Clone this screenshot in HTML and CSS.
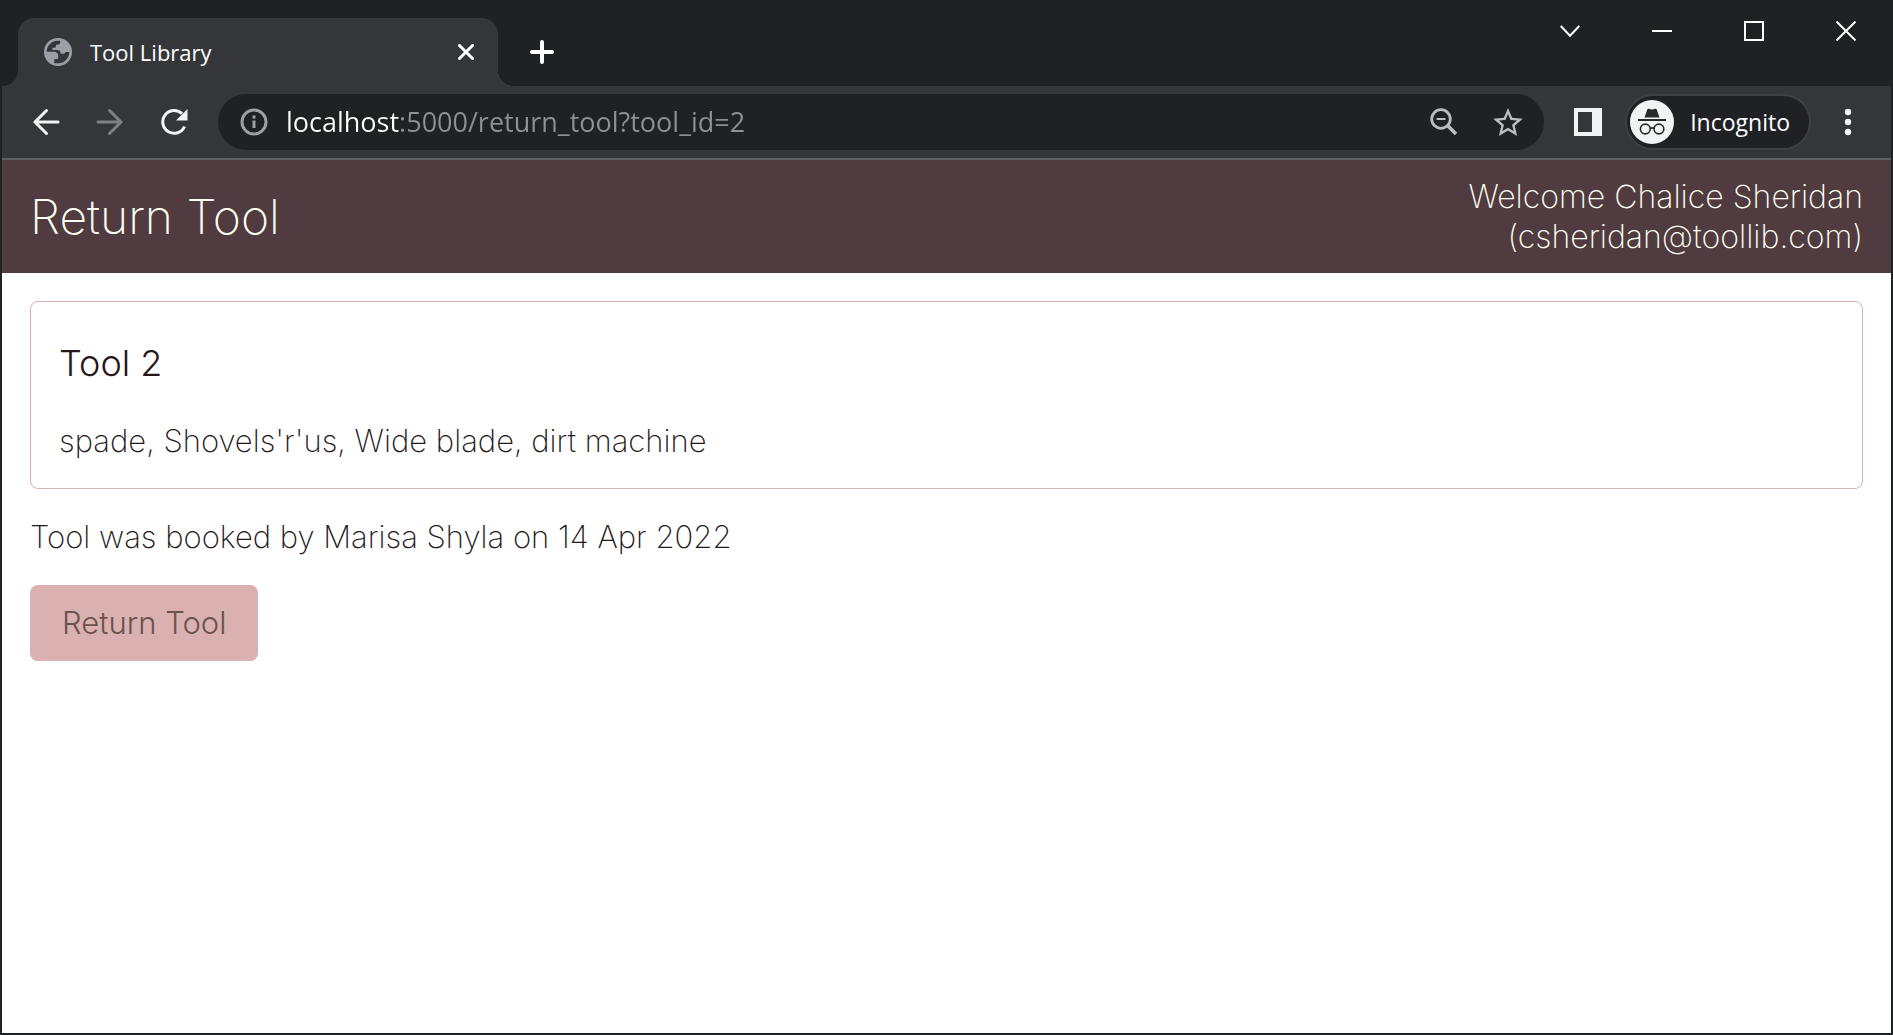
FILE: index.html
```html
<!DOCTYPE html>
<html lang="en">
<head>
<meta charset="utf-8">
<meta name="viewport" content="width=device-width, initial-scale=1">
<title>Tool Library</title>
<link rel="stylesheet" href="styles.css">
</head>
<body>
<div class="window">
  <div class="tab-strip">
    <div class="tab">
      <svg class="tab-globe" viewBox="0 0 28 28" width="28" height="28" aria-hidden="true"><circle cx="14" cy="14" r="14" fill="#9aa0a6"/><path d="M2.700 13.800C2.700 7.500 8 2.600 14 2.700h2.200v1.800c0 1.200-1 2.200-2.300 2.200h-2v1.700c0 .8-.6 1.300-1.400 1.300H8.400V12h5.200c1.800 0 3 1.300 3 2.800v.9h3c1 0 1.700-.8 1.700-1.700h4c0 6.300-5 11.300-11.300 11.300h-3.700v-4.200h2.400c1 0 1.500-.7 1.500-1.500v-1.900c0-2.100-1.700-3.900-3.900-3.900z" fill="#35363a"/></svg>
      <span class="tab-title">Tool Library</span>
      <button class="icon-button tab-close" type="button" aria-label="Close tab"><svg viewBox="0 0 16 16" width="16" height="16"><path d="M1.500 1.500l13 13M14.500 1.500l-13 13" stroke="#fff" stroke-width="3" stroke-linecap="round"/></svg></button>
    </div>
    <button class="icon-button new-tab" type="button" aria-label="New tab"><svg viewBox="0 0 24 24" width="24" height="24"><path d="M12 2v20M2 12h20" stroke="#fff" stroke-width="4" stroke-linecap="round"/></svg></button>
    <div class="window-controls">
      <button class="icon-button" type="button" aria-label="Search tabs"><svg viewBox="0 0 20 20" width="20" height="20" fill="none"><path d="M.7 5l9.300 9.800 9.300-9.800" stroke="#fff" stroke-width="2"/></svg></button>
      <button class="icon-button" type="button" aria-label="Minimize"><svg viewBox="0 0 20 20" width="20" height="20"><path d="M0 10h20" stroke="#fff" stroke-width="2"/></svg></button>
      <button class="icon-button" type="button" aria-label="Maximize"><svg viewBox="0 0 20 20" width="20" height="20" fill="none"><path d="M1 1h18v18H1z" stroke="#fff" stroke-width="2"/></svg></button>
      <button class="icon-button" type="button" aria-label="Close window"><svg viewBox="0 0 20 20" width="20" height="20"><path d="M.5.5l19 19M19.500.5l-19 19" stroke="#fff" stroke-width="2"/></svg></button>
    </div>
  </div>

  <div class="toolbar">
    <div class="nav-buttons">
      <button class="icon-button" type="button" aria-label="Back"><svg viewBox="0 0 28 28" width="28" height="28" fill="none"><path d="M26 14H3M14.500 2.500L3 14l11.500 11.500" stroke="#f1f3f4" stroke-width="3" stroke-linecap="round"/></svg></button>
      <button class="icon-button" type="button" aria-label="Forward" disabled><svg viewBox="0 0 28 28" width="28" height="28" fill="none"><path d="M2 14h23M13.500 2.500L25 14 13.500 25.500" stroke="#808184" stroke-width="3" stroke-linecap="round"/></svg></button>
      <button class="icon-button" type="button" aria-label="Reload"><svg viewBox="0 0 28 28" width="28" height="28" fill="none"><path d="M24.600 18.500A11.400 11.400 0 1 1 22 5.600" stroke="#f1f3f4" stroke-width="3"/><path d="M27.500 1v11.500h-11.500z" fill="#f1f3f4"/></svg></button>
    </div>
    <div class="address-bar">
      <button class="icon-button" type="button" aria-label="Site information"><svg viewBox="0 0 28 28" width="28" height="28" fill="none"><circle cx="14" cy="14" r="12" stroke="#9aa0a6" stroke-width="3"/><path d="M14 12.500v7.500M14 7.500v3" stroke="#9aa0a6" stroke-width="3"/></svg></button>
      <input class="address" type="text" aria-label="Address" spellcheck="false" value="localhost:5000/return_tool?tool_id=2">
      <button class="icon-button zoom-button" type="button" aria-label="Zoom"><svg viewBox="0 0 28 28" width="28" height="28" fill="none"><circle cx="11" cy="11" r="9.300" stroke="#bdbdbe" stroke-width="2.800"/><path d="M17.500 17.500l8.500 8.500" stroke="#bdbdbe" stroke-width="3.500"/><path d="M6.500 11h9" stroke="#bdbdbe" stroke-width="2"/></svg></button>
      <button class="icon-button" type="button" aria-label="Bookmark this page"><svg viewBox="2 2 20 19" width="30" height="28"><path d="M22 9.240l-7.190-.62L12 2 9.190 8.630 2 9.240l5.460 4.730L5.820 21 12 17.270 18.180 21l-1.630-7.030L22 9.240zM12 15.400l-3.760 2.270 1-4.280-3.320-2.880 4.380-.38L12 6.100l1.710 4.040 4.380.38-3.320 2.880 1 4.280L12 15.400z" fill="#bdbdbe"/></svg></button>
    </div>
    <button class="icon-button side-panel" type="button" aria-label="Side panel"><svg viewBox="0 0 28 28" width="28" height="28"><path d="M0 0h28v28H0zM4 4v20h14V4z" fill="#f1f3f4" fill-rule="evenodd"/></svg></button>
    <button class="profile" type="button">
      <svg viewBox="0 0 44 44" width="44" height="44" fill="none" aria-hidden="true"><circle cx="22" cy="22" r="22" fill="#f1f3f4"/><path d="M14.500 17.500l2.700-7.800c.3-.9.900-1.200 1.700-.9 2 .8 4.200.8 6.200 0 .8-.3 1.400 0 1.700.9l2.700 7.800z" fill="#292a2d"/><path d="M8 20h28" stroke="#292a2d" stroke-width="2"/><circle cx="15.300" cy="29" r="4.900" stroke="#292a2d" stroke-width="1.600"/><circle cx="28.900" cy="29" r="4.900" stroke="#292a2d" stroke-width="1.600"/><path d="M20.200 28.500q2-1.200 3.900 0" stroke="#292a2d" stroke-width="1.600"/></svg>
      <span>Incognito</span>
    </button>
    <button class="icon-button menu" type="button" aria-label="Menu"><svg viewBox="0 0 8 28" width="8" height="28" fill="#f1f3f4"><circle cx="4" cy="4" r="3.200"/><circle cx="4" cy="14" r="3.200"/><circle cx="4" cy="24" r="3.200"/></svg></button>
  </div>

  <div class="page">
    <header class="page-header">
      <h1>Return Tool</h1>
      <p class="welcome">Welcome Chalice Sheridan<br>(csheridan@toollib.com)</p>
    </header>
    <main class="content">
      <section class="card">
        <h2>Tool 2</h2>
        <p>spade, Shovels'r'us, Wide blade, dirt machine</p>
      </section>
      <p>Tool was booked by Marisa Shyla on 14 Apr 2022</p>
      <button class="return-button" type="button">Return Tool</button>
    </main>
  </div>
</div>
</body>
</html>
```
FILE: styles.css
```css
* {
  box-sizing: border-box;
}

body {
  margin: 0;
  background: #202124;
  font-family: "Open Sans", "Noto Sans", sans-serif;
}

button {
  border: 0;
  padding: 0;
  font: inherit;
}

svg {
  display: block;
}

.window {
  display: flex;
  flex-direction: column;
  min-height: 100vh;
  padding: 0 2px 2px;
  background: #202124;
}

.icon-button {
  flex: none;
  background: none;
}

/* Tab strip */
.tab-strip {
  display: flex;
  align-items: flex-start;
  height: 86px;
  padding-left: 16px;
}

.tab {
  position: relative;
  display: flex;
  align-items: center;
  align-self: flex-end;
  width: 480px;
  height: 68px;
  padding: 0 24px 0 26px;
  border-radius: 16px 16px 0 0;
  background: #35363a;
}

/* Flared corners where the tab meets the toolbar */
.tab::before,
.tab::after {
  content: "";
  position: absolute;
  bottom: 0;
  width: 16px;
  height: 16px;
}

.tab::before {
  left: -16px;
  background: radial-gradient(circle at 0 0, #202124 16px, #35363a 16px);
}

.tab::after {
  right: -16px;
  background: radial-gradient(circle at 100% 0, #202124 16px, #35363a 16px);
}

.tab-title {
  flex: 1;
  padding-left: 18px;
  color: #fff;
  font-size: 22px;
}

.new-tab {
  margin: 40px 0 0 32px;
}

.window-controls {
  display: flex;
  gap: 72px;
  margin-left: auto;
  padding: 21px 35px 0 0;
}

/* Toolbar */
.toolbar {
  display: flex;
  align-items: center;
  height: 74px;
  padding: 0 39px 0 30px;
  border-bottom: 2px solid #5f6063;
  background: #35363a;
}

.nav-buttons {
  display: flex;
  gap: 36px;
}

.address-bar {
  display: flex;
  flex: 1;
  align-items: center;
  min-width: 0;
  height: 56px;
  margin-left: 30px;
  padding: 0 21px 0 22px;
  border-radius: 28px;
  background: #202124;
}

.address {
  flex: 1;
  min-width: 0;
  margin-left: 18px;
  padding: 0;
  border: 0;
  outline: 0;
  /* The host name is bright, the rest of the address is dim */
  background: linear-gradient(to right, #fff 114px, #8e9194 114px);
  background-clip: text;
  color: transparent;
  font: 27px/36px "Open Sans", "Noto Sans", sans-serif;
}

.zoom-button {
  margin-right: 35px;
}

.side-panel {
  margin-left: 30px;
}

.profile {
  display: flex;
  align-items: center;
  gap: 16px;
  height: 56px;
  margin-left: 23px;
  padding: 0 19px 0 3px;
  border: 2px solid #3f4043;
  border-radius: 28px;
  background: #202124;
  color: #fff;
  font-size: 23px;
}

.menu {
  margin-left: 33px;
}

/* Tool library page */
.page {
  flex: 1;
  background: #fff;
  color: #26171a;
  font-family: Inter, "Open Sans", sans-serif;
  font-size: 31px;
  font-weight: 200;
  line-height: 40px;
}

.page h1,
.page h2,
.page p {
  margin: 0;
}

.page-header {
  display: flex;
  align-items: center;
  justify-content: space-between;
  gap: 28px;
  min-height: 113px;
  padding: 16px 28px;
  background: #503c40;
  color: #fffff0;
}

.page-header h1 {
  font-size: 48px;
  font-weight: 200;
  line-height: 64px;
}

.welcome {
  font-size: 32px;
  text-align: right;
}

.content {
  display: flex;
  flex-direction: column;
  align-items: flex-start;
  gap: 28px;
  padding: 28px;
}

.card {
  display: flex;
  flex-direction: column;
  align-self: stretch;
  gap: 36px;
  padding: 39px 28px 27px;
  border: 1px solid #dab1b0;
  border-radius: 8px;
}

.card h2 {
  font-size: 36px;
  font-weight: 300;
  line-height: 44px;
}

.return-button {
  padding: 16px 32px;
  border-radius: 8px;
  background: #dab1b0;
  color: #6b534e;
  font-size: 31px;
  font-weight: 300;
  line-height: 44px;
}
```
